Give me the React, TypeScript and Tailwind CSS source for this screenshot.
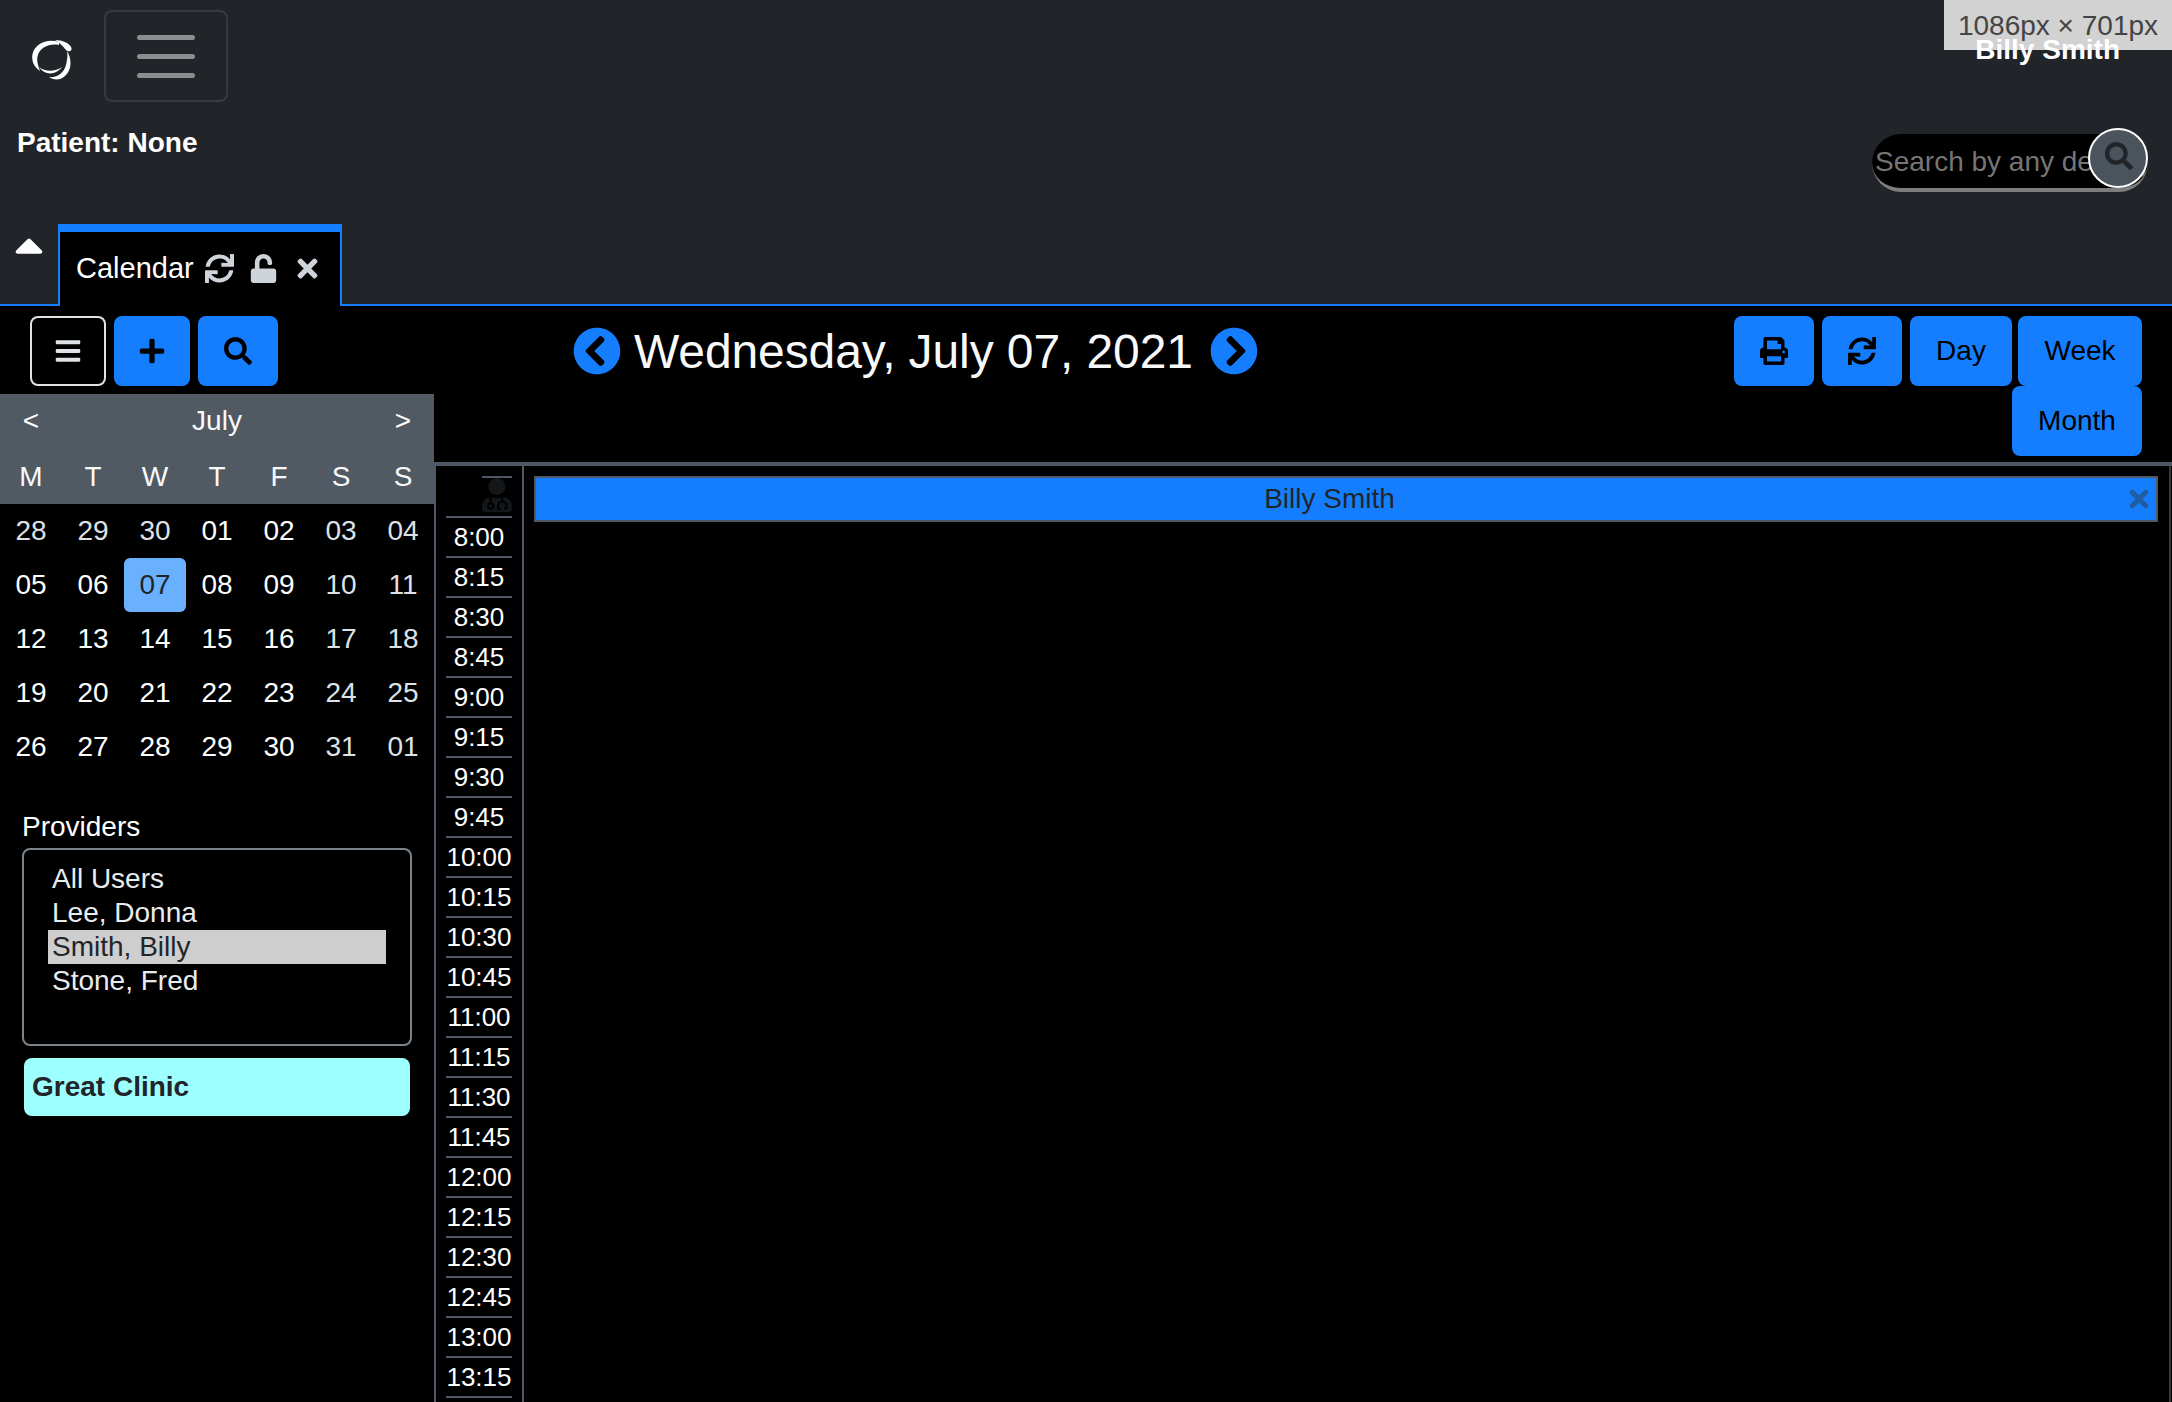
import React from 'react'
import {
  FaBars,
  FaCaretUp,
  FaChevronCircleLeft,
  FaChevronCircleRight,
  FaPlus,
  FaPrint,
  FaSearch,
  FaSync,
  FaTimes,
  FaUnlock,
  FaUserMd,
} from 'react-icons/fa'

const weeks = [
  ['28', '29', '30', '01', '02', '03', '04'],
  ['05', '06', '07', '08', '09', '10', '11'],
  ['12', '13', '14', '15', '16', '17', '18'],
  ['19', '20', '21', '22', '23', '24', '25'],
  ['26', '27', '28', '29', '30', '31', '01'],
]

const times = [
  '8:00', '8:15', '8:30', '8:45', '9:00', '9:15', '9:30', '9:45',
  '10:00', '10:15', '10:30', '10:45', '11:00', '11:15', '11:30', '11:45',
  '12:00', '12:15', '12:30', '12:45', '13:00', '13:15',
]

function Logo() {
  return (
    <svg width="40" height="40" viewBox="0 0 40 40" fill="#fff" className="mt-[8px]">
      <path d="M27 2C16-2 3 3 0.5 14C-1 22 3 28 8 31C6 25 4 20 6 15C8 8 17 3 27 5Z" />
      <path d="M23 0C30 0 38 3 39.5 8C40 12 36 12 34 10C31 6 28 3 23 0Z" />
      <path d="M35 11C40 19 40 30 33 36C28 41 21 40 17 37C25 38 32 33 34 25C35 20 36 16 35 11Z" />
      <path d="M7 27C13 32 23 32 30 27C24 35 13 36 7 27Z" />
    </svg>
  )
}

function Header() {
  return (
    <header className="relative h-[306px] bg-[#212529] border-b-2 border-[#147eff] text-white">
      <div className="flex justify-between">
        <div>
          <div className="flex items-center pt-[10px] pl-[32px]">
            <Logo />
            <button className="ml-[32px] w-[124px] h-[92px] flex flex-col items-center justify-center gap-[14px] rounded-lg border-2 border-[#363b40]">
              <span className="block w-[58px] h-[5px] rounded bg-[#8b8d8f]" />
              <span className="block w-[58px] h-[5px] rounded bg-[#8b8d8f]" />
              <span className="block w-[58px] h-[5px] rounded bg-[#8b8d8f]" />
            </button>
          </div>
          <div className="pl-[17px] mt-[25px] text-[28px] leading-[32px] font-bold">Patient: None</div>
        </div>
        <div className="flex flex-col items-end pr-[24px]">
          <div className="relative z-10 mt-[33px] mr-[28px] text-[28px] leading-[34px] font-bold">Billy Smith</div>
          <div className="relative mt-[67px] w-[276px] h-[58px] rounded-full bg-black border-b-4 border-[#7d7d7d]">
            <span className="block pl-[3px] pr-[57px] pt-[10px] text-[28px] leading-[36px] text-[#757575] whitespace-nowrap overflow-hidden">Search by any demographics</span>
            <button className="absolute right-0 top-[-6px] w-[60px] h-[60px] rounded-full bg-[#4b545c] border-2 border-white flex items-center justify-center">
              <FaSearch size={28} color="#212529" className="mb-[4px] ml-[2px]" />
            </button>
          </div>
        </div>
      </div>
      <div className="absolute left-0 right-0 bottom-[-2px] flex items-end">
        <div className="w-[58px] h-[82px] flex justify-center">
          <FaCaretUp size={46} color="#fff" className="-mt-[2px] -ml-[1px]" />
        </div>
        <div className="w-[284px] h-[82px] flex items-center gap-[11px] pl-[16px] bg-black border-x-2 border-t-8 border-[#147eff]">
          <span className="text-[29px] leading-none -mt-[2px]">Calendar</span>
          <span className="flex items-center text-[#ced4da] -mt-[2px]">
            <FaSync size={29} />
            <FaUnlock size={29} className="ml-[15px]" />
            <FaTimes size={29} className="ml-[15px]" />
          </span>
        </div>
      </div>
      <div className="absolute top-0 right-0 w-[228px] h-[50px] bg-[#d2d2d2] text-[#444] text-[28px] leading-[52px] text-center">
        1086px × 701px
      </div>
    </header>
  )
}

function Sidebar() {
  return (
    <aside className="w-[434px] shrink-0">
      <div className="flex pt-[10px] pl-[30px] gap-[8px]">
        <button className="w-[76px] h-[70px] flex items-center justify-center rounded-lg border-2 border-[#dee2e6] text-[#dee2e6]">
          <FaBars size={28} />
        </button>
        <button className="w-[76px] h-[70px] flex items-center justify-center rounded-lg bg-[#147eff] text-black">
          <FaPlus size={28} />
        </button>
        <button className="w-[80px] h-[70px] flex items-center justify-center rounded-lg bg-[#147eff] text-black">
          <FaSearch size={28} />
        </button>
      </div>

      <div className="mt-[8px] bg-[#515963] text-white h-[110px]">
        <div className="h-[54px] flex items-center justify-between text-[28px]">
          <span className="w-[62px] text-center">&lt;</span>
          <span className="text-[#f8f9fa]">July</span>
          <span className="w-[62px] text-center">&gt;</span>
        </div>
        <div className="grid grid-cols-7 h-[56px] text-[28px] leading-[58px] text-center text-[#f8f9fa]">
          {['M', 'T', 'W', 'T', 'F', 'S', 'S'].map((d, i) => (
            <span key={i}>{d}</span>
          ))}
        </div>
      </div>

      <div className="grid grid-cols-7 text-[28px] text-center">
        {weeks.map((week, w) =>
          week.map((day, d) => {
            const dim = d >= 5 || (w === 0 && d < 3)
            const selected = w === 1 && d === 2
            return (
              <span
                key={`${w}-${d}`}
                className={
                  selected
                    ? 'h-[54px] leading-[54px] rounded-md bg-[#69b1ff] text-[#212529]'
                    : dim
                      ? 'h-[54px] leading-[54px] text-[#dee2e6]'
                      : 'h-[54px] leading-[54px] text-white'
                }
              >
                {day}
              </span>
            )
          }),
        )}
      </div>

      <div className="mt-[35px] pl-[22px] text-[28px] leading-[36px] text-white">Providers</div>
      <div className="ml-[22px] mt-[3px] w-[390px] h-[198px] rounded-lg border-2 border-[#7b838b] pt-[12px] pl-[24px] pr-[24px] text-[28px] leading-[34px] text-[#e9ecef]">
        <div className="pl-[4px]">All Users</div>
        <div className="pl-[4px]">Lee, Donna</div>
        <div className="pl-[4px] bg-[#cecece] text-[#212529]">Smith, Billy</div>
        <div className="pl-[4px]">Stone, Fred</div>
      </div>
      <div className="ml-[24px] mt-[12px] w-[386px] h-[58px] rounded-lg bg-[#9effff] pl-[8px] text-[28px] leading-[58px] font-bold text-[#212529]">
        Great Clinic
      </div>
    </aside>
  )
}

function Schedule() {
  return (
    <main className="flex-1 min-w-0">
      <div className="h-[156px] flex items-start justify-between pr-[30px]">
        <div className="flex items-center gap-[13px] pl-[139px] pt-[20px] text-white">
          <FaChevronCircleLeft size={48} color="#147eff" />
          <h1 className="mr-[4px] pt-[2px] text-[48px] leading-[48px] tracking-[-0.1px] font-normal text-[#f8f9fa] whitespace-nowrap">Wednesday, July 07, 2021</h1>
          <FaChevronCircleRight size={48} color="#147eff" />
        </div>
        <div className="flex flex-col items-end pt-[10px] text-[28px] text-black">
          <div className="flex">
            <button className="w-[80px] h-[70px] flex items-center justify-center rounded-lg bg-[#147eff]">
              <FaPrint size={28} />
            </button>
            <button className="ml-[8px] w-[80px] h-[70px] flex items-center justify-center rounded-lg bg-[#147eff]">
              <FaSync size={28} />
            </button>
            <button className="ml-[8px] w-[102px] h-[70px] rounded-lg bg-[#147eff]">Day</button>
            <button className="ml-[6px] w-[124px] h-[70px] rounded-lg bg-[#147eff]">Week</button>
          </div>
          <button className="w-[130px] h-[70px] rounded-lg bg-[#147eff]">Month</button>
        </div>
      </div>

      <div className="h-[940px] overflow-hidden border-t-4 border-l-2 border-[#4f5864]">
        <div className="flex h-full mr-[1px] border-r-2 border-[#33383f]">
          <div className="w-[88px] shrink-0 px-[10px] border-r-2 border-[#4f5864]">
            <div className="mt-[10px] h-[42px] border-b-2 border-[#4f5864] flex justify-end relative">
              <div className="absolute top-0 right-0 w-[30px] h-[2px] bg-[#4f5864]" />
              <FaUserMd size={34} color="#14171a" className="mt-[2px] -mr-[2px]" />
            </div>
            {times.map((t) => (
              <div key={t} className="h-[40px] border-b-2 border-[#4f5864] text-[26px] leading-[38px] text-center text-white">
                {t}
              </div>
            ))}
          </div>
          <div className="flex-1 min-w-0 pl-[10px] pr-[11px] pt-[10px]">
            <div className="h-[46px] flex items-center border-2 border-[#4f5864] bg-[#147eff] pr-[3px]">
              <span className="flex-1 text-center text-[28px] text-[#212529] pr-[2px]">Billy Smith</span>
              <FaTimes size={28} color="#1f5da5" />
            </div>
          </div>
        </div>
      </div>
    </main>
  )
}

export default function App() {
  return (
    <div className="h-[1402px] overflow-hidden bg-black font-['Liberation_Sans',Arial,sans-serif]">
      <Header />
      <div className="flex">
        <Sidebar />
        <Schedule />
      </div>
    </div>
  )
}
